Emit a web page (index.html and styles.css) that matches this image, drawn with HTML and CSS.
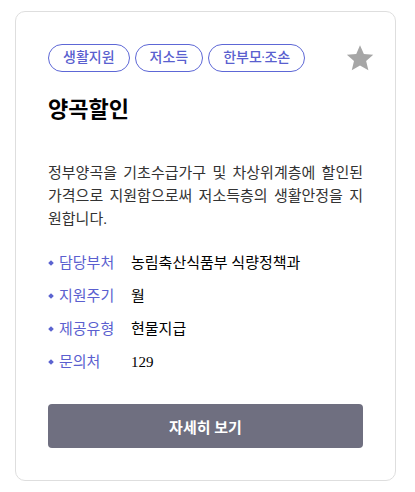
FILE: index.html
```html
<!DOCTYPE html>
<html>
<head>
  <meta name="viewport" content="width=device-width, initial-scale=1">
  <link rel="stylesheet" href="styles.css">
</head>
<body>

  <div class="card">
    <div class="cardTop">
      <div class="tags">
        <span class="tag">생활지원</span>
        <span class="tag">저소득</span>
        <span class="tag">한부모<span class="dot">·</span>조손</span>
      </div>
      <button class="starBtn" type="button" aria-label="즐겨찾기">
        <svg width="30" height="30" viewBox="0 0 24 24">
          <path d="M12 1.8l3.1 7 7.5.6-5.7 5 1.8 7.4L12 17.9l-6.6 3.9 1.8-7.4-5.7-5 7.5-.6z" fill="#a6a6a6"/>
        </svg>
      </button>
    </div>

    <h2 class="title">양곡할인</h2>

    <p class="desc">정부양곡을 기초수급가구 및 차상위계층에 할인된 가격으로 지원함으로써 저소득층의 생활안정을 지원합니다.</p>

    <ul class="info">
      <li><span class="label">담당부처</span><span class="value">농림축산식품부 식량정책과</span></li>
      <li><span class="label">지원주기</span><span class="value">월</span></li>
      <li><span class="label">제공유형</span><span class="value">현물지급</span></li>
      <li><span class="label">문의처</span><span class="value">129</span></li>
    </ul>

    <button class="detailBtn" type="button">자세히 보기</button>
  </div>

</body>
</html>
```

FILE: styles.css
```css
body {
  margin: 0;
  padding: 11px 15px;
  background-color: #fff;
  font-family: "Liberation Serif", "Noto Sans CJK KR", serif;
  color: #000;
}

.card {
  width: 381px;
  box-sizing: border-box;
  border: 1px solid #dedede;
  border-radius: 10px;
  padding: 32px;
}

.cardTop {
  display: flex;
  justify-content: space-between;
  align-items: center;
  height: 28px;
}

.tags {
  display: flex;
  gap: 5px;
}

.tag {
  height: 28px;
  box-sizing: border-box;
  padding: 0 14px;
  border: 1px solid #5d67d6;
  border-radius: 14px;
  color: #5a5fcf;
  font-size: 14px;
  font-weight: 500;
  line-height: 26px;
}

.tag .dot {
  margin: 0 -1px;
}

.starBtn {
  border: none;
  background: none;
  padding: 0;
  margin-right: -12px;
  width: 30px;
  height: 30px;
  cursor: pointer;
}

.starBtn svg {
  display: block;
}

.title {
  margin: 22px 0 0;
  font-size: 22px;
  line-height: 32px;
  font-weight: bold;
}

.desc {
  margin: 36px 0 0;
  font-size: 15px;
  line-height: 23px;
  color: #333;
  text-align: justify;
}

.info {
  list-style: none;
  margin: 20px 0 0;
  padding: 0;
}

.info li {
  display: flex;
  align-items: center;
  font-size: 15px;
  line-height: 24px;
  margin-bottom: 9px;
}

.info li:last-child {
  margin-bottom: 0;
}

.label {
  position: relative;
  width: 72px;
  padding-left: 11px;
  color: #5b5fcf;
}

.label::before {
  content: "";
  position: absolute;
  left: 1px;
  top: 10px;
  width: 4px;
  height: 4px;
  background-color: #5b63d0;
  transform: rotate(45deg);
}

.value {
  color: #000;
}

.detailBtn {
  display: block;
  width: 100%;
  height: 44px;
  margin-top: 30px;
  border: none;
  border-radius: 4px;
  background-color: #6f6f80;
  color: #fff;
  font-family: "Liberation Serif", "Noto Sans CJK KR", serif;
  font-size: 15px;
  font-weight: bold;
  cursor: pointer;
}
```
